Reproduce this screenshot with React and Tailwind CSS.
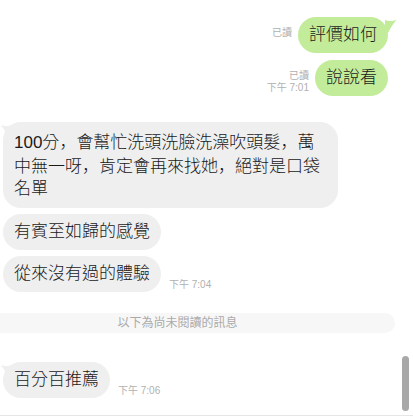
const font = { fontFamily: '"Liberation Sans", "Noto Sans CJK TC", sans-serif' };
const commaFont = { fontFamily: '"Noto Sans CJK SC", sans-serif' };

function TailRight() {
	return (
		<svg className="absolute top-[2px] -right-[9px]" width="12" height="14" viewBox="0 0 12 14">
			<path d="M0 1 C4 2.5 8 2.5 11.5 0.5 C9 4 6 8 3 14 L0 14 Z" fill="#c2ec99" />
		</svg>
	);
}

function TailLeft() {
	return (
		<svg className="absolute top-[2px] -left-[3px]" width="12" height="14" viewBox="0 0 12 14">
			<path d="M12 1 C8 2.5 4 2.5 0.5 0.5 C3 4 6 8 9 14 L12 14 Z" fill="#efefef" />
		</svg>
	);
}

// full-width commas sit low-left, as in the reference
function withCommas(text) {
	return text.split("，").flatMap((part, i) =>
		i === 0 ? [part] : [<span key={i} style={commaFont}>，</span>, part]
	);
}

function Sent({ text, time, tail }) {
	return (
		<div className="flex justify-end items-end">
			<div className="mr-[6px] mb-[3px] flex flex-col items-end text-[10px] leading-[11px] text-[#b0b0b0]">
				<span>已讀</span>
				<span className="h-[11px] mt-[1px]">{time}</span>
			</div>
			<div className="relative">
				{tail && <TailRight />}
				<div className="relative bg-[#c2ec99] rounded-[18px] px-[11px] py-[7px] text-[17px] leading-[22px] font-light text-[#1a1a1a]">
					{text}
				</div>
			</div>
		</div>
	);
}

function Received({ text, time, tail, wide }) {
	return (
		<div className="flex items-end pl-[3px]">
			<div className="relative">
				{tail && <TailLeft />}
				<div
					className={
						"relative bg-[#efefef] rounded-[18px] px-[11px] text-[17px] leading-[22px] font-light text-[#1a1a1a] " +
						(wide ? "w-[335px] py-[8px]" : "py-[7px]")
					}
				>
					{withCommas(text)}
				</div>
			</div>
			{time && (
				<span className="ml-[8px] mb-[2px] text-[10px] leading-[11px] text-[#b0b0b0]">{time}</span>
			)}
		</div>
	);
}

export default function App() {
	return (
		<div className="relative w-[413px] h-[416px] bg-white border-b border-[#e6e6e6] overflow-hidden" style={font}>
			<div className="flex flex-col pt-[17px] pr-[25px]">
				<Sent text="評價如何" tail />
				<div className="h-[7px]" />
				<Sent text="說說看" time="下午 7:01" />
				<div className="h-[26px]" />
				<Received
					wide
					tail
					text="100分，會幫忙洗頭洗臉洗澡吹頭髮，萬中無一呀，肯定會再來找她，絕對是口袋名單"
				/>
				<div className="h-[6px]" />
				<Received text="有賓至如歸的感覺" />
				<div className="h-[6px]" />
				<Received text="從來沒有過的體驗" time="下午 7:04" />
				<div className="h-[21px]" />
				<div className="-ml-[40px] w-[435px] h-[20px] rounded-full bg-[#f7f7f7] flex items-center justify-center text-[12px] text-[#aaaaaa]">
					以下為尚未閱讀的訊息
				</div>
				<div className="h-[29px]" />
				<Received text="百分百推薦" time="下午 7:06" tail />
			</div>
			<div className="absolute right-[4px] top-[356px] w-[7px] h-[55px] rounded-full bg-[#a8a8a8]" />
		</div>
	);
}
